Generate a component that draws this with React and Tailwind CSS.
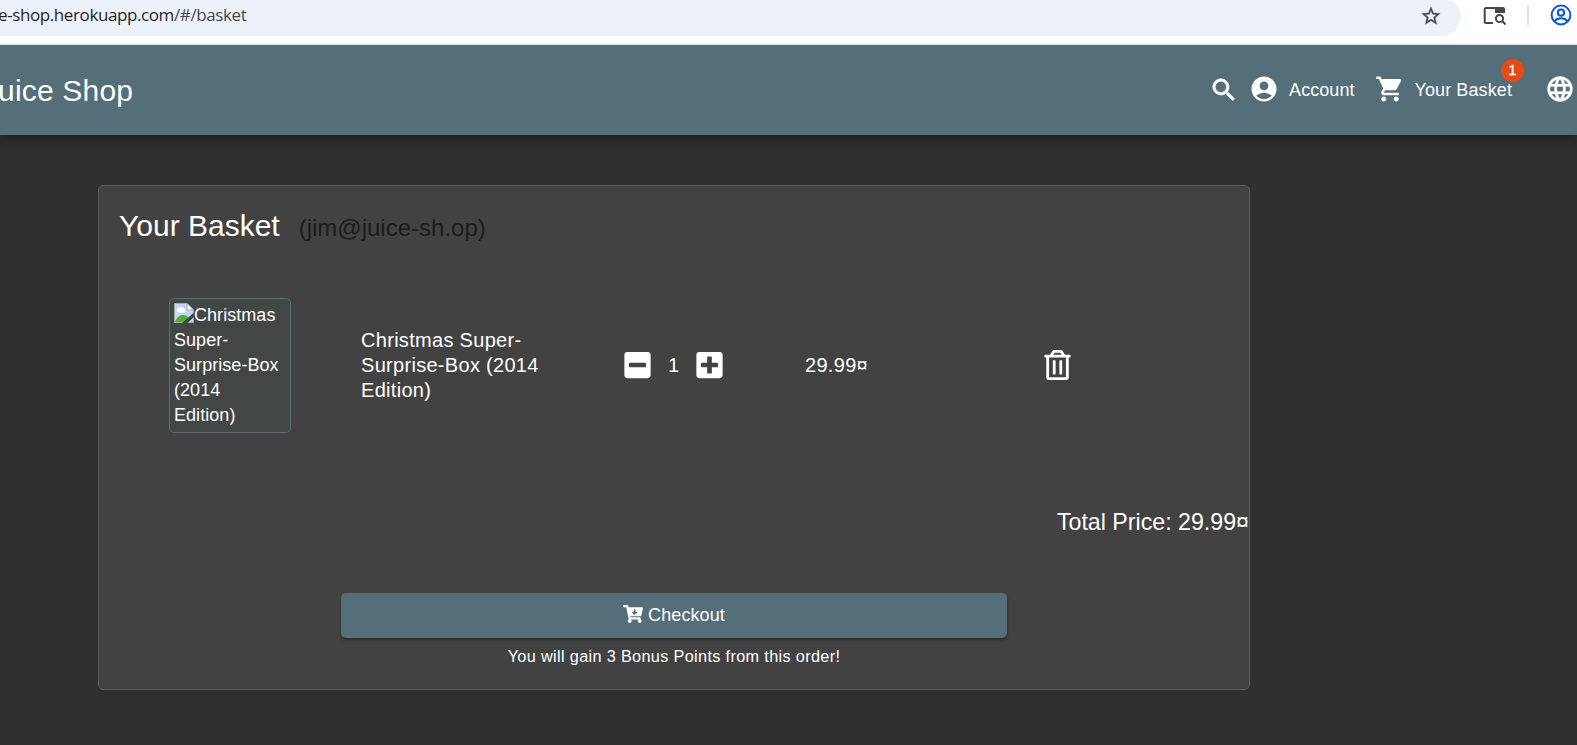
import { FaCartArrowDown, FaMinusSquare, FaPlusSquare, FaRegTrashAlt } from "react-icons/fa";
import { MdAccountCircle, MdLanguage, MdSearch, MdShoppingCart, MdStarBorder } from "react-icons/md";

function SidePanelSearchIcon() {
  return (
    <svg className="h-[20px] w-[24px] shrink-0" viewBox="0 0 24 20" fill="none" stroke="#474747" strokeWidth="2">
      <path d="M10 18H3.200A1.500 1.500 0 0 1 1.700 16.500V4.500A1.500 1.500 0 0 1 3.200 3H20" />
      <path d="M12 2h8a2 2 0 0 1 2 2v4H12z" fill="#474747" stroke="none" />
      <circle cx="16.500" cy="13.500" r="3.600" />
      <path d="M19 16L22.500 19.500" />
    </svg>
  );
}

function ProfileIcon() {
  return (
    <svg className="h-[22px] w-[22px] shrink-0" viewBox="0 0 22 22" fill="none" stroke="#0b57d0" strokeWidth="2">
      <circle cx="11" cy="11" r="9.400" />
      <circle cx="11" cy="8.700" r="3.100" />
      <path d="M4.300 17.300C6 15.200 8.300 14.300 11 14.300s5 .9 6.700 3" />
    </svg>
  );
}

function BrokenImageIcon() {
  return (
    <svg className="-mt-[2px] inline-block h-[20px] w-[20px] align-[-2px]" viewBox="0 0 20 20">
      <path d="M.5.500H13l6.500 6.500V19.500H.5z" fill="#c5d6f5" stroke="#a9a9a9" />
      <path d="M4 9.500a2 2 0 0 1 .5-3.900 2.700 2.700 0 0 1 5 0A2 2 0 0 1 10 9.500z" fill="#fff" />
      <path d="M1 19c1-4 4.500-7 8-7 3 0 5 2 6 4v3z" fill="#53ab3a" />
      <path d="M13 .5V7h6.500z" fill="#fff" stroke="#a9a9a9" />
      <path d="M20 9.500L8.500 19.500v.5h5L20 14z" fill="#424645" />
    </svg>
  );
}

function BrowserBar() {
  return (
    <div className="relative z-20 flex h-[45px] items-start border-b border-[#dcdcdc] bg-white">
      <div className="flex h-[36px] w-[1461px] shrink-0 items-center justify-between rounded-br-[20px] rounded-tr-[16px] bg-[#ecf1fa] pb-[5px] pr-[19px]">
        <div className="-ml-[2px] pb-[1px] whitespace-nowrap font-['Open_Sans',sans-serif] text-[17px] tracking-[-0.400px] text-[#1f1f1f]">
          e-shop.herokuapp.com<span className="text-[#474747]">/#/basket</span>
        </div>
        <MdStarBorder className="h-[22px] w-[22px] text-[#474747] [&>path[fill=none]]:stroke-none" stroke="currentColor" strokeWidth="0.4" />
      </div>
      <div className="flex h-[30px] items-center pl-[22px]">
        <SidePanelSearchIcon />
        <div className="ml-[20px] h-[20px] w-[2px] bg-[#d3e3fd]" />
        <div className="ml-[21px]">
          <ProfileIcon />
        </div>
      </div>
    </div>
  );
}

function Toolbar() {
  return (
    <header className="relative z-10 flex h-[90px] items-center justify-between overflow-hidden bg-[#546e7a] text-white">
      <div className="-ml-[2px] text-[30px] tracking-[0.200px]">uice Shop</div>
      <nav className="flex items-center text-[18px]">
        <MdSearch className="h-[30px] w-[30px] [&>path[fill=none]]:stroke-none" stroke="currentColor" strokeWidth="0.5" />
        <MdAccountCircle className="mb-[2px] ml-[10px] h-[30px] w-[30px]" />
        <span className="ml-[10px] tracking-[0.050px]">Account</span>
        <MdShoppingCart className="mb-[2px] ml-[20px] h-[30px] w-[30px]" />
        <span className="relative ml-[10px] whitespace-nowrap tracking-[0.100px]">
          Your Basket
          <span className="absolute -right-[12px] -top-[18px] flex h-[23px] w-[23px] items-center justify-center rounded-full bg-[#e64a19] text-[15px] [-webkit-text-stroke:0.3px_white]">
            1
          </span>
        </span>
        <MdLanguage className="mb-[2px] ml-[33px] mr-[2px] h-[30px] w-[30px] [&>path[fill=none]]:stroke-none" stroke="currentColor" strokeWidth="0.3" />
      </nav>
    </header>
  );
}

function BasketRow() {
  return (
    <div className="mt-[49px] flex h-[136px] items-center pl-[70px] text-[20px] leading-[25px] tracking-[0.300px]">
      <div className="h-[135px] w-[122px] shrink-0 rounded-[5px] border border-[#546e7a] bg-[#424645] p-[4px] text-[18px] tracking-[0.050px]">
        <BrokenImageIcon />
        Christmas Super-Surprise-Box (2014 Edition)
      </div>
      <div className="ml-[70px] w-[190px] shrink-0">Christmas Super-Surprise-Box (2014 Edition)</div>
      <div className="ml-[73px] flex w-[181px] items-center">
        <FaMinusSquare className="h-[30px] w-[27px]" />
        <span className="ml-[17px] w-[28px]">1</span>
        <FaPlusSquare className="h-[30px] w-[27px]" />
      </div>
      <div className="w-[239px]">29.99¤</div>
      <FaRegTrashAlt className="h-[30px] w-[27px]" />
    </div>
  );
}

export default function App() {
  return (
    <div className="h-[745px] w-[1577px] overflow-hidden bg-[#303030] font-['Liberation_Sans',Arial,sans-serif] text-white">
      <BrowserBar />
      <div className="shadow-[0_5px_12px_rgba(0,0,0,0.4)]">
        <Toolbar />
      </div>
      <main className="ml-[98px] mt-[50px] flex h-[505px] w-[1152px] flex-col rounded-[5px] border border-[#5a5a5a] bg-[#424242]">
        <h1 className="flex items-baseline pl-[20px] pt-[20px] text-[30px] leading-[40px]">
          Your Basket
          <small className="ml-[19px] text-[24px] text-[#1c1c1c]">(jim@juice-sh.op)</small>
        </h1>
        <BasketRow />
        <div className="mt-[74px] self-end whitespace-nowrap text-[23.200px] leading-[30px]">Total Price: 29.99¤</div>
        <button className="ml-[242px] mt-[56px] flex h-[45px] w-[666px] items-center justify-center rounded-[5px] bg-[#546e7a] text-[18px] shadow-[0_2px_3px_rgba(0,0,0,0.35)]">
          <FaCartArrowDown className="mb-[3px] mr-[5px] h-[18px] w-[20px]" />
          <span className="tracking-[0.100px]">Checkout</span>
        </button>
        <div className="mt-[7px] text-center text-[16.250px] leading-[22px] tracking-[0.340px]">
          You will gain 3 Bonus Points from this order!
        </div>
      </main>
    </div>
  );
}
